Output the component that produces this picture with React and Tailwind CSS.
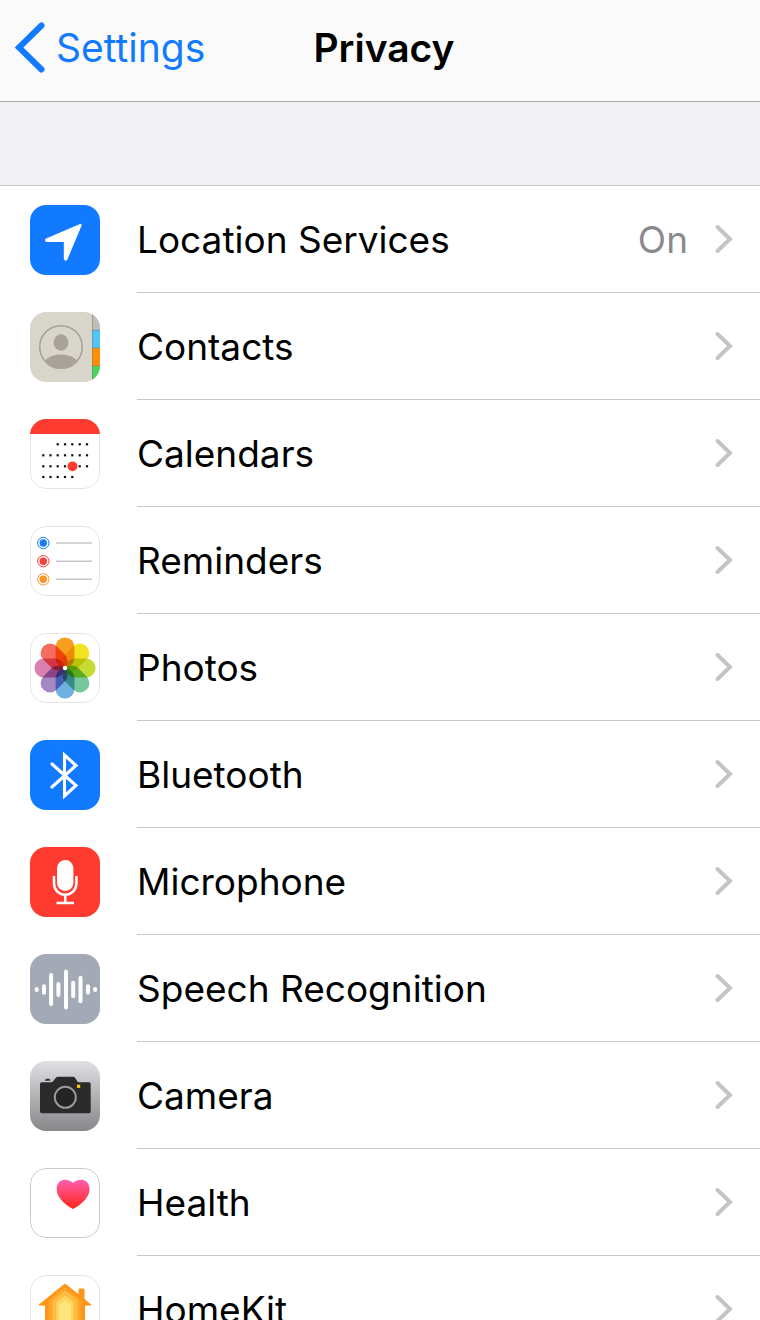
import React from "react";

const Tile = ({ className, children }) => (
  <svg
    viewBox="0 0 70 70"
    aria-hidden="true"
    className={`size-[70px] shrink-0 rounded-2xl ${className}`}
  >
    {children}
  </svg>
);

const Outline = ({ color = "#e4e4e6" }) => (
  <rect x="0.5" y="0.5" width="69" height="69" rx="15.5" fill="none" stroke={color} />
);

const LocationIcon = () => (
  <Tile className="bg-[#117aff]">
    <path
      d="M50.5 20 L16.5 34.5 Q15.8 35.5 17 35.8 H35 V53.5 Q35.3 54.8 36.3 54 Z"
      fill="#fff"
      stroke="#fff"
      strokeWidth="2.4"
      strokeLinejoin="round"
    />
  </Tile>
);

const ContactsIcon = () => (
  <Tile className="bg-[#d8d5cb]">
    <defs>
      <clipPath id="contact-face">
        <circle cx="31" cy="35" r="21" />
      </clipPath>
    </defs>
    <circle cx="31" cy="35" r="21.3" fill="none" stroke="#a9a29b" strokeWidth="1.6" />
    <ellipse cx="31" cy="30.5" rx="7.4" ry="8.2" fill="#a9a29b" />
    <ellipse cx="31" cy="55" rx="19" ry="12.5" fill="#a9a29b" clipPath="url(#contact-face)" />
    <rect x="62" width="8" height="18" fill="#bfbdb7" />
    <rect x="62" y="18" width="8" height="18" fill="#52c5f7" />
    <rect x="62" y="36" width="8" height="18" fill="#ff8f08" />
    <rect x="62" y="54" width="8" height="16" fill="#4bd162" />
    <path d="M62.5 0V70M62 18.3H70M62 36H70M62 54H70" stroke="#6b6a5c" strokeOpacity="0.4" />
  </Tile>
);

const calendarDots = [
  { y: 25.3, xs: [27.7, 35, 42.3, 49.7, 57] },
  { y: 36.3, xs: [13.3, 20.5, 27.7, 35, 42.3, 49.7, 57] },
  { y: 47.3, xs: [13.3, 20.5, 27.7, 35, 49.7, 57] },
  { y: 58, xs: [13.3, 20.5, 27.7, 35, 42.3] },
];

const CalendarIcon = () => (
  <Tile className="bg-white">
    <Outline />
    <path d="M0 15V0H70V15Z" fill="#ff3b30" />
    {calendarDots.map((row) =>
      row.xs.map((x) => (
        <rect key={`${x}-${row.y}`} x={x - 1.1} y={row.y - 1.1} width="2.2" height="2.2" fill="#111" />
      ))
    )}
    <circle cx="42.5" cy="47.3" r="4.9" fill="#ff3b30" />
  </Tile>
);

const reminders = [
  { y: 17, color: "#147efb" },
  { y: 35.2, color: "#fc3d39" },
  { y: 53.3, color: "#fd9426" },
];

const RemindersIcon = () => (
  <Tile className="bg-white">
    <Outline />
    {reminders.map(({ y, color }) => (
      <g key={y}>
        <circle cx="13.3" cy={y} r="3.7" fill={color} />
        <circle cx="13.3" cy={y} r="5.7" fill="none" stroke={color} strokeWidth="1" />
        <path d={`M26 ${y}H62`} stroke="#c6c6ca" strokeWidth="1.4" />
      </g>
    ))}
  </Tile>
);

const petals = [
  "#f99d1c",
  "#f2e422",
  "#c5dc35",
  "#76c79c",
  "#6fb0e2",
  "#a587c4",
  "#d880ae",
  "#f76b60",
];

const PhotosIcon = () => (
  <Tile className="isolate bg-white">
    <Outline />
    {petals.map((color, i) => (
      <rect
        key={color}
        x="25.6"
        y="4.5"
        width="18.8"
        height="30"
        rx="9.2"
        fill={color}
        transform={`rotate(${i * 45} 35 35)`}
        className="mix-blend-multiply"
      />
    ))}
    <circle cx="35" cy="35" r="2.2" fill="#fff" />
  </Tile>
);

const BluetoothIcon = () => (
  <Tile className="bg-[#117aff]">
    <path
      d="M22 24 L46 45.5 L34.5 56 V15 L46 25.5 L22 47"
      fill="none"
      stroke="#fff"
      strokeWidth="3.1"
      strokeLinecap="round"
    />
  </Tile>
);

const MicrophoneIcon = () => (
  <Tile className="bg-[#ff3b30]">
    <rect x="27" y="13" width="16.4" height="31" rx="8.2" fill="#fff" />
    <path
      d="M24 29V36C24 43 28.5 47.7 35.2 47.7S46.4 43 46.4 36V29M35.2 47.7V56M26.5 56H44"
      fill="none"
      stroke="#fff"
      strokeWidth="2.5"
    />
  </Tile>
);

const bars = [
  { x: 6.7, h: 5 },
  { x: 14, h: 10.5 },
  { x: 21.1, h: 33 },
  { x: 28.4, h: 15 },
  { x: 36, h: 40 },
  { x: 43.2, h: 17.5 },
  { x: 50.5, h: 27.5 },
  { x: 58, h: 10.5 },
  { x: 65.1, h: 5 },
];

const SpeechIcon = () => (
  <Tile className="bg-[#a3aab5]">
    {bars.map(({ x, h }) => (
      <rect key={x} x={x - 2} y={35.4 - h / 2} width="4" height={h} rx="2" fill="#fff" />
    ))}
  </Tile>
);

const CameraIcon = () => (
  <Tile className="bg-linear-to-b from-[#e0e0e4] to-[#88888a]">
    <path
      d="M12 21.3H21C24 21.3 25 15.8 28 15.8H43C46 15.8 46.5 21.3 49 21.3H59Q60.7 21.3 60.7 23V50.5Q60.7 52.3 59 52.3H12Q10 52.3 10 50.5V23Q10 21.3 12 21.3Z"
      fill="#2b2b2c"
    />
    <path d="M15 19.7Q15 17.7 17 17.7H18.500Q20.5 17.7 20.5 19.7Z" fill="#2b2b2c" />
    <circle cx="35.3" cy="36.3" r="10.5" fill="#242425" stroke="#9b9b9d" strokeWidth="2" />
    <rect x="47" y="23.7" width="3.2" height="3.2" fill="#ffcc00" />
  </Tile>
);

const HealthIcon = () => (
  <Tile className="bg-white">
    <defs>
      <linearGradient id="heart" x1="0" y1="0" x2="0" y2="1">
        <stop offset="0" stopColor="#ff5fb0" />
        <stop offset="1" stopColor="#ff2518" />
      </linearGradient>
    </defs>
    <Outline color="#c9c9cb" />
    <path
      d="M43 41C38 38.5 26.7 31 26.7 21C26.7 15.5 30 11.7 34.7 11.7C38.5 11.7 41.5 13 43 15C44.5 13 47.5 11.7 51.5 11.7C56 11.7 59.5 15.5 59.5 21C59.5 31 48 38.5 43 41Z"
      fill="url(#heart)"
    />
  </Tile>
);

const HomeKitIcon = () => (
  <Tile className="bg-white">
    <Outline />
    <path
      d="M35 9L49 20V14H54V24L61 30H54.5V62H15.5V30H9Z"
      fill="#ff9417"
      stroke="#ff9417"
      strokeLinejoin="round"
    />
    <path d="M35 12L51.5 25.5V58H18.5V25.5Z" fill="#ffa428" />
    <path d="M35 15.5L47.7 25V54H22.3V25Z" fill="#ffbc41" />
    <path d="M35 20.5L43.5 27V50H26.5V27Z" fill="#fdd65f" />
    <path d="M35 25.5L41 30V46H29V30Z" fill="#fde57e" />
  </Tile>
);

const items = [
  { name: "Location Services", Icon: LocationIcon, value: "On" },
  { name: "Contacts", Icon: ContactsIcon },
  { name: "Calendars", Icon: CalendarIcon },
  { name: "Reminders", Icon: RemindersIcon },
  { name: "Photos", Icon: PhotosIcon },
  { name: "Bluetooth", Icon: BluetoothIcon },
  { name: "Microphone", Icon: MicrophoneIcon },
  { name: "Speech Recognition", Icon: SpeechIcon },
  { name: "Camera", Icon: CameraIcon },
  { name: "Health", Icon: HealthIcon },
  { name: "HomeKit", Icon: HomeKitIcon },
];

const Row = ({ name, Icon, value }) => (
  <li>
    <a href="#" className="flex h-[107px] items-center pl-[30px]">
      <Icon />
      <span className="ml-[37px] flex h-full grow items-center border-b border-[#c8c7cc] pr-[26px]">
        <span className="grow pt-0.5">{name}</span>
        {value && <span className="mr-[26px] pt-0.5 text-[#8a8a8e]">{value}</span>}
        <svg
          viewBox="0 0 20 30"
          aria-hidden="true"
          className="h-[30px] w-5 shrink-0"
          fill="none"
          stroke="#c4c4c6"
          strokeWidth="4"
          strokeLinecap="round"
        >
          <path d="M3.5 3L16 15L3.5 27" />
        </svg>
      </span>
    </a>
  </li>
);

const App = () => {
  return (
    <div className="flex h-screen flex-col bg-[#f2f1f6] font-['Inter',sans-serif] text-[37px] leading-[48px] text-black">
      <header className="grid shrink-0 grid-cols-[1fr_auto_1fr] items-center border-b border-[#a9a9ad] bg-[#fafafa] pt-[22px] pr-1.5 pb-[28px] pl-3.5 text-[39px]">
        <a href="#" className="flex items-center gap-2.5 text-[#117aff]">
          <svg
            viewBox="0 0 32 51"
            aria-hidden="true"
            className="h-[51px] w-8 shrink-0"
            fill="none"
            stroke="currentColor"
            strokeWidth="6"
            strokeLinecap="round"
          >
            <path d="M27.5 3.5L5 25.5L27.5 47.5" />
          </svg>
          Settings
        </a>
        <h1 className="font-semibold">Privacy</h1>
      </header>
      <main className="min-h-0 grow overflow-y-auto pt-[83px] [scrollbar-width:none]">
        <ul className="border-t border-[#c8c7cc] bg-white">
          {items.map((item) => (
            <Row key={item.name} {...item} />
          ))}
        </ul>
      </main>
    </div>
  );
};

export default App;
